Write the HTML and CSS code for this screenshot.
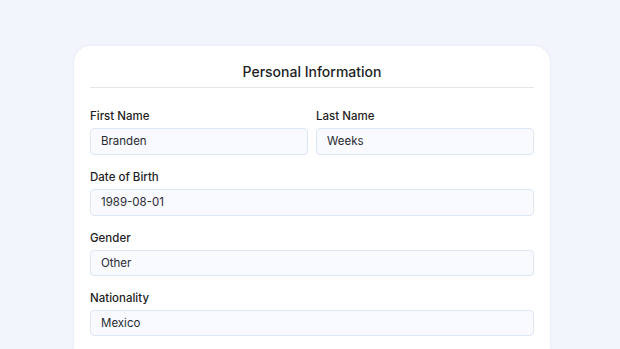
FILE: index.html
```html
<!DOCTYPE html>
<html>
<head>
<meta charset="utf-8">
<link rel="stylesheet" href="styles.css">
</head>
<body>
<div class="page">
  <div class="card">
    <h2 class="title">Personal Information</h2>
    <div class="row">
      <div class="field">
        <label class="label">First Name</label>
        <div class="input tall">Branden</div>
      </div>
      <div class="field">
        <label class="label">Last Name</label>
        <div class="input tall">Weeks</div>
      </div>
    </div>
    <div class="field">
      <label class="label">Date of Birth</label>
      <div class="input tall">1989-08-01</div>
    </div>
    <div class="field">
      <label class="label">Gender</label>
      <div class="input">Other</div>
    </div>
    <div class="field">
      <label class="label">Nationality</label>
      <div class="input">Mexico</div>
    </div>
  </div>
</div>
</body>
</html>
```
FILE: styles.css
```css
* { box-sizing: border-box; }
html, body { margin: 0; padding: 0; }
body {
  background: #f3f5fc;
  font-family: Inter, "Noto Sans", sans-serif;
  color: #1e1e24;
  width: 620px;
  height: 349px;
  overflow: hidden;
}
.page {
  padding-top: 46px;
  padding-left: 74px;
}
.card {
  width: 476px;
  height: 303px;
  overflow: hidden;
  background: #ffffff;
  border-radius: 16px 16px 0 0;
  padding: 16px 16px 0 16px;
  box-shadow: 0 0 3px rgba(200, 208, 230, 0.4);
  display: flex;
  flex-direction: column;
  gap: 14px;
}
.title {
  margin: 0 0 6px 0;
  font-size: 14px;
  line-height: 20px;
  font-weight: 500;
  text-align: center;
  padding-bottom: 5px;
  border-bottom: 1px solid #e4e6ec;
  flex: none;
}
.row {
  display: flex;
  gap: 8px;
  flex: none;
}
.row .field { flex: 1; }
.field {
  display: flex;
  flex-direction: column;
  gap: 4px;
  flex: none;
}
.label {
  font-size: 11.5px;
  line-height: 16px;
  font-weight: 500;
  color: #1e1e24;
}
.input {
  height: 26px;
  border: 1px solid #dbe7f4;
  background: #f8faff;
  border-radius: 4px;
  padding: 0 10px;
  font-size: 11.5px;
  line-height: 24px;
  color: #2a2a30;
}
.input.tall { height: 27px; line-height: 25px; }
```
